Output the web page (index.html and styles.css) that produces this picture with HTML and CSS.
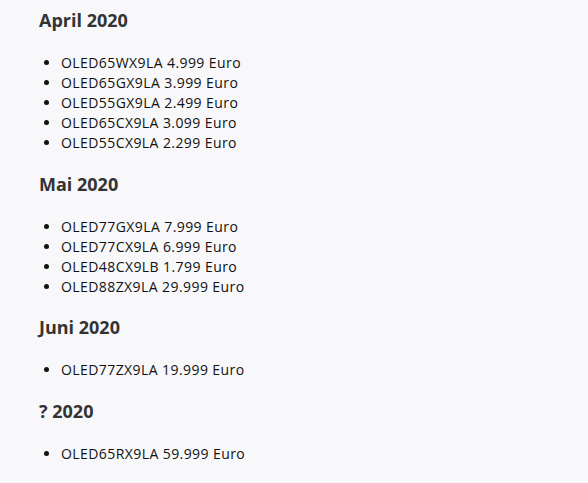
FILE: index.html
```html
<!DOCTYPE html>
<html lang="de">
<head>
<meta charset="utf-8">
<title>LG OLED 2020</title>
<link rel="stylesheet" href="styles.css">
</head>
<body>
<div class="content">
  <h3 class="month">April 2020</h3>
  <ul class="models">
    <li>OLED65WX9LA 4.999 Euro</li>
    <li>OLED65GX9LA 3.999 Euro</li>
    <li>OLED55GX9LA 2.499 Euro</li>
    <li>OLED65CX9LA 3.099 Euro</li>
    <li>OLED55CX9LA 2.299 Euro</li>
  </ul>
  <h3 class="month">Mai 2020</h3>
  <ul class="models">
    <li>OLED77GX9LA 7.999 Euro</li>
    <li>OLED77CX9LA 6.999 Euro</li>
    <li>OLED48CX9LB 1.799 Euro</li>
    <li>OLED88ZX9LA 29.999 Euro</li>
  </ul>
  <h3 class="month">Juni 2020</h3>
  <ul class="models">
    <li>OLED77ZX9LA 19.999 Euro</li>
  </ul>
  <h3 class="month">? 2020</h3>
  <ul class="models">
    <li>OLED65RX9LA 59.999 Euro</li>
  </ul>
</div>
</body>
</html>
```
FILE: styles.css
```css
html, body {
  margin: 0;
  padding: 0;
  background: #f8f8fa;
}
.content {
  padding: 8px 0 0 39px;
  font-family: "Open Sans", "DejaVu Sans", sans-serif;
}
.month {
  margin: 0 0 21px;
  font-size: 18px;
  line-height: 24px;
  font-weight: 700;
  color: #333333;
}
.models {
  margin: 0 0 18.5px;
  padding-left: 22px;
  list-style: disc;
  font-size: 14px;
  line-height: 20px;
  letter-spacing: 0.42px;
  color: #111111;
}
.models li::marker {
  letter-spacing: 2.5px;
}
```
